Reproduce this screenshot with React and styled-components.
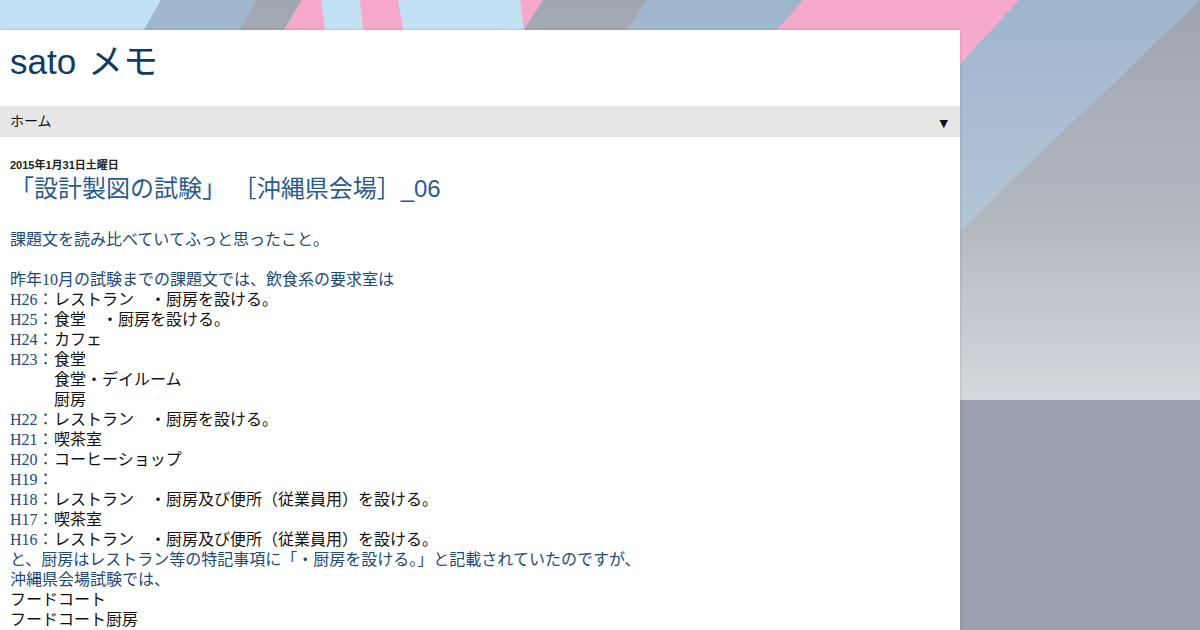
import React from 'react';
import styled, { createGlobalStyle } from 'styled-components';

const GlobalStyle = createGlobalStyle`
  html, body {
    margin: 0;
    padding: 0;
  }
  body {
    background: #9aa0ae;
    font-family: 'Liberation Serif', 'Noto Sans CJK JP', serif;
    overflow: hidden;
  }
`;

const rows = [
  { label: 'H26：', text: 'レストラン　・厨房を設ける。' },
  { label: 'H25：', text: '食堂　・厨房を設ける。' },
  { label: 'H24：', text: 'カフェ' },
  { label: 'H23：', text: '食堂' },
  { label: '', text: '食堂・デイルーム' },
  { label: '', text: '厨房' },
  { label: 'H22：', text: 'レストラン　・厨房を設ける。' },
  { label: 'H21：', text: '喫茶室' },
  { label: 'H20：', text: 'コーヒーショップ' },
  { label: 'H19：', text: '' },
  { label: 'H18：', text: 'レストラン　・厨房及び便所（従業員用）を設ける。' },
  { label: 'H17：', text: '喫茶室' },
  { label: 'H16：', text: 'レストラン　・厨房及び便所（従業員用）を設ける。' },
];

function Backdrop() {
  return (
    <BackdropLayer>
      <svg width="1200" height="400" viewBox="0 0 1200 400">
        <defs>
          <linearGradient id="fade" x1="0" y1="0" x2="0" y2="1">
            <stop offset="0" stopColor="#fff" stopOpacity="0" />
            <stop offset="0.55" stopColor="#fff" stopOpacity="0.2" />
            <stop offset="1" stopColor="#fff" stopOpacity="0.56" />
          </linearGradient>
        </defs>
        <rect x="0" y="0" width="1200" height="400" fill="#c3e1f4" />
        <polygon points="647,0 1200,0 1200,400 300,400" fill="#9fb6cd" />
        <polygon points="161,0 256,0 230,45 135,45" fill="#9fb6cd" />
        <polygon points="256,0 302,0 275,45 230,45" fill="#a1a8b4" />
        <polygon points="302,0 321,0 327,45 275,45" fill="#f5a8ca" />
        <polygon points="360,0 398,0 406,45 365,45" fill="#f5a8ca" />
        <polygon points="520,0 543,0 524,30" fill="#f5a8ca" />
        <polygon points="543,0 647,0 617,45 514,45" fill="#a1a8b4" />
        <polygon points="803,0 1019,0 950,75 738,75" fill="#f5a8ca" />
        <polygon points="1200,0 1200,400 784,400" fill="#a0a6b1" />
        <rect x="0" y="0" width="1200" height="400" fill="url(#fade)" />
      </svg>
    </BackdropLayer>
  );
}

function App() {
  return (
    <>
      <GlobalStyle />
      <Backdrop />
      <Page>
        <Panel>
          <Header>
            <BlogTitle>sato メモ</BlogTitle>
          </Header>
          <NavBar>
            <NavItem>ホーム</NavItem>
            <NavArrow>▼</NavArrow>
          </NavBar>
          <Content>
            <DateHeader>2015年1月31日土曜日</DateHeader>
            <PostTitle>「設計製図の試験」{'\u00a0'}［沖縄県会場］_06</PostTitle>
            <PostBody>
              <Line>課題文を読み比べていてふっと思ったこと。</Line>
              <Line>&nbsp;</Line>
              <Line>昨年10月の試験までの課題文では、飲食系の要求室は</Line>
              {rows.map((row, i) => (
                <Line key={i}>
                  <Label>{row.label}</Label>
                  <Plain>{row.text}</Plain>
                </Line>
              ))}
              <Line>と、厨房はレストラン等の特記事項に「・厨房を設ける。」と記載されていたのですが、</Line>
              <Line>沖縄県会場試験では、</Line>
              <Line $dark>フードコート</Line>
              <Line $dark>フードコート厨房</Line>
            </PostBody>
          </Content>
        </Panel>
      </Page>
    </>
  );
}

const BackdropLayer = styled.div`
  position: absolute;
  top: 0;
  left: 0;
  width: 1200px;
  height: 400px;
  z-index: 0;
  svg {
    display: block;
  }
`;

const Page = styled.div`
  position: relative;
  z-index: 1;
  width: 960px;
  padding-top: 30px;
`;

const Panel = styled.div`
  background: #fff;
  min-height: 600px;
  box-shadow: 0 0 3px rgba(0, 0, 0, 0.18);
`;

const Header = styled.div`
  height: 76px;
  box-sizing: border-box;
  padding: 12px 10px 0;
`;

const BlogTitle = styled.h1`
  margin: 0;
  font-family: 'Liberation Sans', 'Noto Sans CJK JP', sans-serif;
  font-weight: normal;
  font-size: 35px;
  line-height: 40px;
  word-spacing: 2px;
  color: #123a62;
`;

const NavBar = styled.div`
  display: flex;
  align-items: center;
  justify-content: space-between;
  height: 31px;
  padding: 0 12px 4px 10px;
  background: #e6e6e6;
  border-top: 1px solid #ededed;
  box-sizing: border-box;
`;

const NavItem = styled.span`
  font-family: 'Liberation Sans', 'Noto Sans CJK JP', sans-serif;
  font-size: 14px;
  color: #111;
`;

const NavArrow = styled.span`
  font-family: 'DejaVu Sans', sans-serif;
  font-size: 11px;
  color: #111;
  padding-top: 6px;
`;

const Content = styled.div`
  padding: 21px 10px 0;
`;

const DateHeader = styled.h2`
  margin: 0;
  font-family: 'Liberation Sans', 'Noto Sans CJK JP', sans-serif;
  font-weight: bold;
  font-size: 11px;
  line-height: 14px;
  color: #222;
`;

const PostTitle = styled.h3`
  margin: 2px 0 0;
  font-family: 'Liberation Sans', 'Noto Sans CJK JP', sans-serif;
  font-weight: normal;
  font-size: 24px;
  line-height: 30px;
  color: #2a5b90;
`;

const PostBody = styled.div`
  margin-top: 26px;
  font-size: 16px;
  line-height: 20px;
  color: #21497a;
`;

const Line = styled.div`
  white-space: pre;
  height: 20px;
  color: ${p => (p.$dark ? '#111' : 'inherit')};
`;

const Label = styled.span`
  display: inline-block;
  min-width: 44px;
`;

const Plain = styled.span`
  color: #111;
`;

export default App;
